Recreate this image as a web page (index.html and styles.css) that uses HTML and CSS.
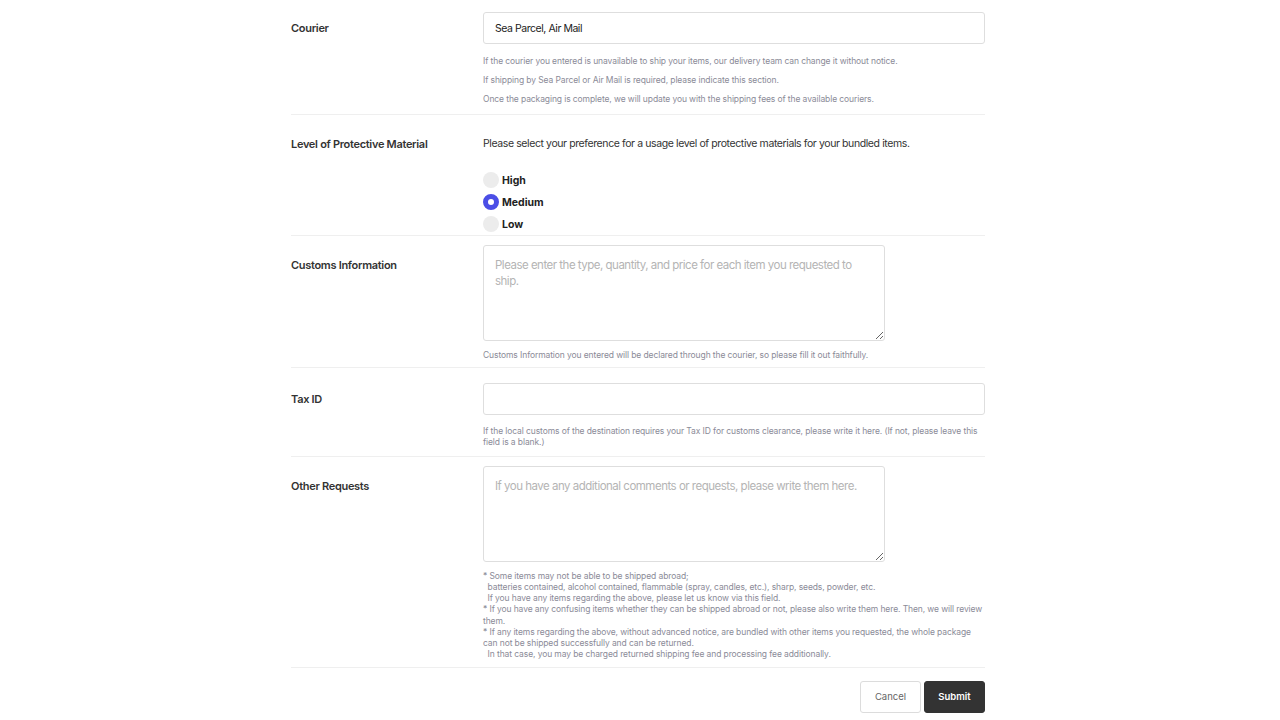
FILE: index.html
```html
<!DOCTYPE html>
<html lang="en">
<head>
    <meta charset="UTF-8">
    <meta name="viewport" content="width=device-width, initial-scale=1.0">
    <title>Shipping Request</title>
    <link rel="stylesheet" href="styles.css">
</head>
<body>
    <form class="ship-form">
        <div class="form-row row-courier">
            <div class="row-label label-input">Courier</div>
            <div class="row-field">
                <input type="text" class="text-input" value="Sea Parcel, Air Mail">
                <div class="help help-spaced">
                    <p>If the courier you entered is unavailable to ship your items, our delivery team can change it without notice.</p>
                    <p>If shipping by Sea Parcel or Air Mail is required, please indicate this section.</p>
                    <p>Once the packaging is complete, we will update you with the shipping fees of the available couriers.</p>
                </div>
            </div>
        </div>

        <div class="form-row row-level">
            <div class="row-label">Level of Protective Material</div>
            <div class="row-field">
                <p class="desc">Please select your preference for a usage level of protective materials for your bundled items.</p>
                <div class="radio-list">
                    <label class="radio"><input type="radio" name="level" value="high"><span class="dot"></span>High</label>
                    <label class="radio"><input type="radio" name="level" value="medium" checked><span class="dot"></span>Medium</label>
                    <label class="radio"><input type="radio" name="level" value="low"><span class="dot"></span>Low</label>
                </div>
            </div>
        </div>

        <div class="form-row row-customs">
            <div class="row-label">Customs Information</div>
            <div class="row-field">
                <textarea class="text-area" placeholder="Please enter the type, quantity, and price for each item you requested to ship."></textarea>
                <div class="help">
                    <p>Customs Information you entered will be declared through the courier, so please fill it out faithfully.</p>
                </div>
            </div>
        </div>

        <div class="form-row row-tax">
            <div class="row-label label-input">Tax ID</div>
            <div class="row-field">
                <input type="text" class="text-input">
                <div class="help help-tight">
                    <p>If the local customs of the destination requires your Tax ID for customs clearance, please write it here. (If not, please leave this field is a blank.)</p>
                </div>
            </div>
        </div>

        <div class="form-row row-other">
            <div class="row-label">Other Requests</div>
            <div class="row-field">
                <textarea class="text-area" placeholder="If you have any additional comments or requests, please write them here."></textarea>
                <div class="help help-tight help-pre">* Some items may not be able to be shipped abroad;
  batteries contained, alcohol contained, flammable (spray, candles, etc.), sharp, seeds, powder, etc.
  If you have any items regarding the above, please let us know via this field.
* If you have any confusing items whether they can be shipped abroad or not, please also write them here. Then, we will review them.
* If any items regarding the above, without advanced notice, are bundled with other items you requested, the whole package can not be shipped successfully and can be returned.
  In that case, you may be charged returned shipping fee and processing fee additionally.</div>
            </div>
        </div>

        <div class="form-actions">
            <button type="button" class="btn btn-cancel">Cancel</button>
            <button type="submit" class="btn btn-submit">Submit</button>
        </div>
    </form>
</body>
</html>
```

FILE: styles.css
```css
body {
    margin: 0;
    background-color: #fff;
    font-family: Inter, "Liberation Sans", sans-serif;
    color: #333;
}

.ship-form {
    width: 694px;
    margin: 0 auto 0 291px;
    padding-top: 2px;
}

.form-row {
    display: flex;
    border-bottom: 1px solid #efefef;
    padding: 10px 0 5px;
}

.row-label {
    width: 192px;
    flex-shrink: 0;
    font-size: 11px;
    font-weight: 600;
    letter-spacing: -0.3px;
    line-height: 40px;
    color: #333;
}

.row-label.label-input {
    line-height: 32px;
}

.row-field {
    flex: 1;
    min-width: 0;
}

.text-input {
    display: block;
    width: 100%;
    height: 32px;
    box-sizing: border-box;
    border: 1px solid #dedede;
    border-radius: 3px;
    padding: 0 11px;
    font-family: inherit;
    font-size: 10.5px;
    letter-spacing: -0.45px;
    color: #222;
    outline: none;
}

.text-area {
    display: block;
    width: 402px;
    height: 96px;
    box-sizing: border-box;
    border: 1px solid #dedede;
    border-radius: 3px;
    padding: 11px 11px;
    font-family: inherit;
    font-size: 11.5px;
    letter-spacing: -0.5px;
    line-height: 16px;
    color: #222;
    resize: vertical;
    outline: none;
}

.text-area::placeholder {
    color: #b4b4b4;
}

.help {
    font-size: 8.5px;
    letter-spacing: -0.1px;
    color: #8b8b98;
    line-height: 14px;
    margin-top: 7px;
}

.help p {
    margin: 0;
}

.help-spaced {
    line-height: 19px;
    margin-top: 8px;
}

.help-tight {
    line-height: 11.1px;
    margin-top: 11px;
}

.help-pre {
    white-space: pre-wrap;
    margin-top: 9px;
}

.row-level {
    padding-top: 9px;
    padding-bottom: 0;
}

.desc {
    margin: 0;
    font-size: 10.5px;
    letter-spacing: -0.4px;
    line-height: 40px;
    color: #333;
}

.radio-list {
    display: flex;
    flex-direction: column;
    margin-top: 5px;
}

.radio {
    display: flex;
    align-items: center;
    height: 22px;
    font-size: 10.5px;
    font-weight: 700;
    color: #222;
    cursor: pointer;
}

.radio input {
    display: none;
}

.radio .dot {
    width: 16px;
    height: 16px;
    border-radius: 50%;
    background-color: #ececec;
    margin-right: 3px;
    box-sizing: border-box;
}

.radio input:checked + .dot {
    background-color: #fff;
    border: 5px solid #4b4ee6;
}

.row-customs {
    padding-top: 9px;
    padding-bottom: 5px;
}

.row-tax {
    padding-top: 15px;
    padding-bottom: 8px;
}

.row-other {
    padding-top: 9px;
    padding-bottom: 7px;
}

.form-actions {
    display: flex;
    justify-content: flex-end;
    gap: 3px;
    padding-top: 13px;
}

.btn {
    height: 32px;
    width: 61px;
    border-radius: 3px;
    font-family: inherit;
    font-size: 9.5px;
    cursor: pointer;
}

.btn-cancel {
    background-color: #fff;
    border: 1px solid #dcdcdc;
    color: #666;
}

.btn-submit {
    background-color: #333;
    border: 1px solid #333;
    color: #fff;
    font-weight: 600;
}
```
